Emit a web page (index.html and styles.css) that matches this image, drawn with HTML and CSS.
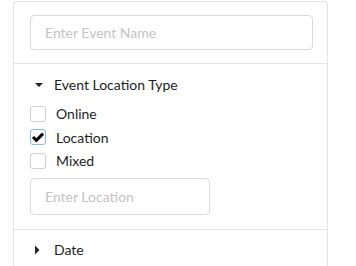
FILE: index.html
```html
<!DOCTYPE html>
<html>
<head>
<meta charset="utf-8">
<link rel="stylesheet" href="styles.css">
</head>
<body>
<div class="card">
  <div class="section first">
    <input class="field wide" type="text" placeholder="Enter Event Name">
  </div>
  <div class="section middle">
    <div class="head">
      <svg class="caret" width="10" height="10" viewBox="0 0 10 10"><polygon points="1,3 9,3 5,7" fill="#222"/></svg>
      <span>Event Location Type</span>
    </div>
    <div class="opts">
      <label class="opt"><span class="box"></span><span>Online</span></label>
      <label class="opt"><span class="box checked"><svg width="14" height="14" viewBox="0 0 14 14"><path d="M2 7 L5.4 10.4 L12 3.6" fill="none" stroke="#000" stroke-width="3" stroke-linejoin="miter"/></svg></span><span>Location</span></label>
      <label class="opt"><span class="box"></span><span>Mixed</span></label>
    </div>
    <input class="field narrow" type="text" placeholder="Enter Location">
  </div>
  <div class="section last">
    <div class="head">
      <svg class="caret" width="10" height="10" viewBox="0 0 10 10"><polygon points="1,0.5 5.5,5 1,9.5" fill="#222"/></svg>
      <span>Date</span>
    </div>
  </div>
</div>
</body>
</html>
```
FILE: styles.css
```css
html, body {
  margin: 0;
  padding: 0;
  background: #fff;
}
body {
  font-family: Lato, "Open Sans", sans-serif;
  font-size: 14px;
  color: #1e1e1e;
  height: 266px;
  overflow: hidden;
}
.card {
  margin: 1px 0 0 13px;
  width: 315px;
  border: 1px solid #e3e3e3;
  border-bottom: none;
  border-radius: 4px 4px 0 0;
  height: 265px;
  box-sizing: border-box;
}
.section {
  padding: 0 16px;
  border-bottom: 1px solid #e6e6e6;
}
.section.first {
  padding-top: 13px;
  padding-bottom: 13px;
}
.section.middle {
  padding-top: 11px;
  padding-bottom: 14px;
}
.section.last {
  padding-top: 10px;
  border-bottom: none;
}
.field {
  display: block;
  box-sizing: border-box;
  height: 35px;
  border: 1px solid #dadada;
  border-radius: 4px;
  padding: 0 14px;
  font-family: Lato, "Open Sans", sans-serif;
  font-size: 14px;
  color: #222;
  outline: none;
  background: #fff;
}
.field::placeholder {
  color: #c4c4c4;
}
.field.wide {
  width: 283px;
}
.field.narrow {
  width: 180px;
  height: 37px;
  margin-top: 5px;
}
.head {
  display: flex;
  align-items: center;
  height: 20px;
  line-height: 20px;
}
.caret {
  margin-left: 4px;
  margin-right: 10px;
  flex: none;
}
.opts {
  margin-top: 7px;
  display: flex;
  flex-direction: column;
}
.opt {
  display: flex;
  align-items: center;
  height: 23.5px;
}
.box {
  box-sizing: border-box;
  width: 16px;
  height: 16px;
  border: 1px solid #d0d0d0;
  border-radius: 3px;
  margin-right: 10px;
  display: flex;
  align-items: center;
  justify-content: center;
  background: #fff;
}
.box.checked {
  border-color: #85bde0;
}
```
